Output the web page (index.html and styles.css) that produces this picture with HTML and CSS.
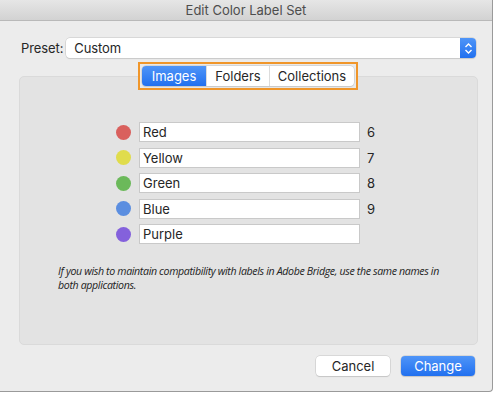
FILE: index.html
```html
<!DOCTYPE html>
<html lang="en">

<head>
  <meta charset="UTF-8">
  <title>Edit Color Label Set</title>
  <link rel="stylesheet" href="styles.css">
</head>

<body>
  <div id="window">
    <div id="titlebar">Edit Color Label Set</div>

    <div id="content">
      <div class="presetRow">
        <label for="preset">Preset:</label>
        <div class="select">
          <span id="preset">Custom</span>
          <span class="stepper">
            <svg width="9" height="13" viewBox="0 0 9 13">
              <path d="M1.5 5 L4.5 2 L7.5 5 M1.5 8 L4.5 11 L7.5 8" fill="none" stroke="#fff" stroke-width="1.4" />
            </svg>
          </span>
        </div>
      </div>

      <div class="groupBox">
        <div class="tabsWrap">
          <div class="tabs">
            <span class="tab active">Images</span>
            <span class="tab">Folders</span>
            <span class="tab">Collections</span>
          </div>
        </div>

        <div class="labels">
          <div class="labelRow">
            <span class="dot red"></span>
            <input type="text" value="Red">
            <span class="key">6</span>
          </div>
          <div class="labelRow">
            <span class="dot yellow"></span>
            <input type="text" value="Yellow">
            <span class="key">7</span>
          </div>
          <div class="labelRow">
            <span class="dot green"></span>
            <input type="text" value="Green">
            <span class="key">8</span>
          </div>
          <div class="labelRow">
            <span class="dot blue"></span>
            <input type="text" value="Blue">
            <span class="key">9</span>
          </div>
          <div class="labelRow">
            <span class="dot purple"></span>
            <input type="text" value="Purple">
            <span class="key"></span>
          </div>
        </div>

        <p class="note">If you wish to maintain compatibility with labels in Adobe Bridge, use the same names in
          both applications.</p>
      </div>

      <div class="buttons">
        <button class="btn">Cancel</button>
        <button class="btn primary">Change</button>
      </div>
    </div>
  </div>
</body>

</html>
```

FILE: styles.css
```css
body {
  margin: 0px;
  background-color: #ffffff;
  font-family: Inter, "Liberation Sans", sans-serif;
  font-size: 13px;
  color: #262626;
}

#window {
  width: 493px;
  height: 392px;
  background-color: #ececec;
  border-right: 1px solid #9a9a9a;
  border-bottom: 1px solid #9a9a9a;
  border-bottom-right-radius: 4px;
  box-sizing: border-box;
  display: flex;
  flex-direction: column;
}

#titlebar {
  height: 20px;
  line-height: 20px;
  text-align: center;
  color: #4d4d4d;
  background: linear-gradient(#e6e6e6, #d2d2d2);
  border-bottom: 1px solid #b9b9b9;
}

#content {
  flex: 1;
  display: flex;
  flex-direction: column;
  padding: 17px 16px 0px 19px;
}

.presetRow {
  display: flex;
  align-items: center;
  gap: 3px;
  padding-left: 2px;
  letter-spacing: -0.1px;
}

.select {
  flex: 1;
  height: 20px;
  display: flex;
  align-items: center;
  justify-content: space-between;
  background-color: #ffffff;
  border-radius: 4px;
  box-shadow: 0px 0px 0px 0.5px #c4c4c4, 0px 1px 1px rgba(0, 0, 0, 0.12);
  padding-left: 8px;
}

.stepper {
  width: 16px;
  height: 20px;
  display: flex;
  align-items: center;
  justify-content: center;
  background: linear-gradient(#4f95f8, #2170ef);
  border-radius: 0px 4px 4px 0px;
}

.groupBox {
  margin-top: 18px;
  height: 269px;
  background-color: #e3e3e3;
  border: 1px solid #dadada;
  border-radius: 5px;
  box-sizing: border-box;
  position: relative;
  width: 459px;
}

.tabsWrap {
  position: absolute;
  top: -15px;
  left: 118px;
  padding: 2px;
  border: 2px solid #f0962a;
  background-color: #e9e9e9;
}

.tabs {
  display: flex;
  height: 20px;
  background-color: #ffffff;
  border-radius: 4px;
  box-shadow: 0px 0px 0px 0.5px #c4c4c4, 0px 1px 1px rgba(0, 0, 0, 0.12);
}

.tab {
  display: flex;
  align-items: center;
  justify-content: center;
  border-left: 1px solid #dcdcdc;
}

.tab:nth-child(1) {
  width: 64px;
  border-left: none;
}

.tab:nth-child(2) {
  width: 62px;
}

.tab:nth-child(3) {
  width: 84px;
}

.tab.active {
  color: #ffffff;
  background: linear-gradient(#4f95f8, #2170ef);
  border-radius: 4px 0px 0px 4px;
}

.labels {
  margin-top: 45px;
  margin-left: 96px;
  display: flex;
  flex-direction: column;
  gap: 5.5px;
}

.labelRow {
  display: flex;
  align-items: center;
}

.dot {
  width: 15px;
  height: 15px;
  border-radius: 50%;
  margin-right: 8px;
}

.red {
  background-color: #d9605d;
}

.yellow {
  background-color: #e0dc4c;
}

.green {
  background-color: #6bb95a;
}

.blue {
  background-color: #5b8ee0;
}

.purple {
  background-color: #8461dc;
}

input {
  width: 221px;
  height: 20px;
  box-sizing: border-box;
  margin: 0px;
  border: 1px solid #c9c9c9;
  background-color: #ffffff;
  font-family: Inter, "Liberation Sans", sans-serif;
  font-size: 13px;
  color: #262626;
  padding: 0px 0px 0px 3px;
  outline: none;
}

.key {
  margin-left: 7px;
}

.note {
  margin: 20px 0px 0px 38px;
  width: 390px;
  font-family: "Open Sans", sans-serif;
  font-style: italic;
  font-size: 10.6px;
  line-height: 14px;
  letter-spacing: -0.35px;
  color: #222222;
}

.buttons {
  display: flex;
  justify-content: flex-end;
  gap: 11px;
  margin-top: 11px;
  padding-right: 1px;
}

.btn {
  width: 74px;
  height: 20px;
  font-family: Inter, "Liberation Sans", sans-serif;
  font-size: 13px;
  color: #262626;
  background-color: #ffffff;
  border: none;
  border-radius: 4px;
  box-shadow: 0px 0px 0px 0.5px #c4c4c4, 0px 1px 1px rgba(0, 0, 0, 0.15);
  padding: 0px;
}

.btn.primary {
  color: #ffffff;
  background: linear-gradient(#4f95f8, #2170ef);
}
```
